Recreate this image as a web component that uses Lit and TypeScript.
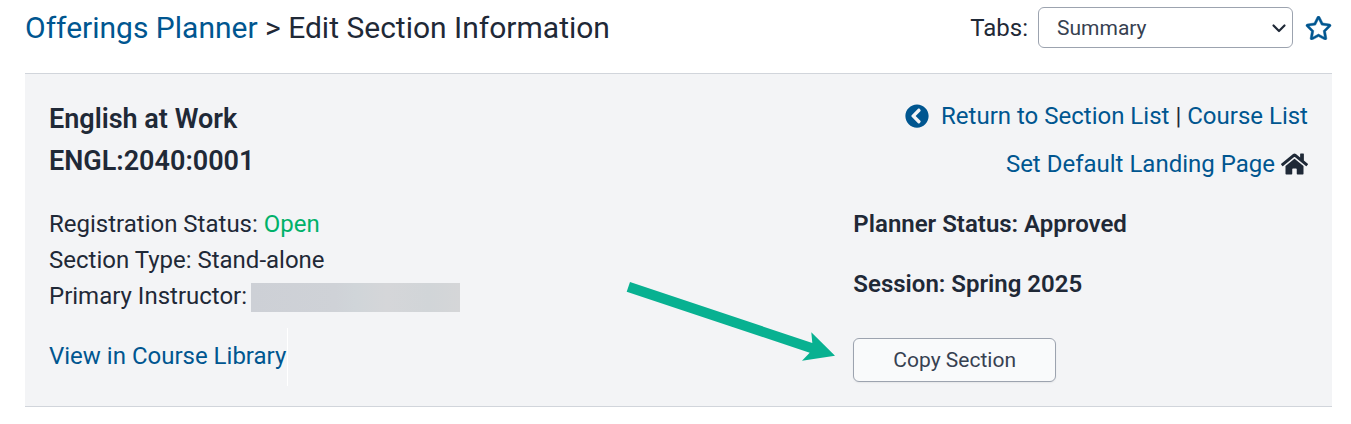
import { LitElement, html, css } from "lit";
import { customElement } from "lit/decorators.js";

@customElement("app-root")
export class AppRoot extends LitElement {
  static styles = css`
    :host {
      display: block;
      padding: 0 19px 16px 25px;
      background: #fff;
      color: #1f2937;
      font-family: Roboto, "Liberation Sans", sans-serif;
      font-size: 24px;
      line-height: 36px;
    }
    * {
      box-sizing: border-box;
    }
    h1, h2, p {
      margin: 0;
    }
    svg {
      display: block;
    }
    a {
      color: #005690;
      text-decoration: none;
    }
    .top {
      display: flex;
      justify-content: space-between;
      align-items: center;
      padding: 7px 0 25px;
    }
    .title {
      font-size: 30px;
      font-weight: 400;
      line-height: 41px;
    }
    .tabs {
      display: flex;
      align-items: center;
      gap: 10px;
    }
    .picker {
      display: grid;
      align-items: center;
      width: 255px;
    }
    .picker select,
    .picker svg {
      grid-area: 1 / 1;
    }
    .picker select {
      appearance: none;
      height: 41px;
      padding: 0 32px 0 18px;
      border: 1px solid #9ca3af;
      border-radius: 6px;
      background: #fff;
      color: #374151;
      font: 400 21px/32px Roboto, "Liberation Sans", sans-serif;
    }
    .picker svg {
      justify-self: end;
      margin-right: 6px;
      pointer-events: none;
    }
    .icon-button {
      padding: 0 0 0 2px;
      border: 0;
      background: none;
      color: #005690;
    }
    .panel {
      display: grid;
      grid-template-columns: 23fr 13fr;
      row-gap: 24px;
      padding: 24px 24px 20px;
      border: solid #d1d5db;
      border-width: 1px 0;
      background: #f3f4f6;
    }
    .course {
      font-size: 27px;
      font-weight: 600;
      line-height: 42px;
    }
    .links {
      display: flex;
      flex-direction: column;
      align-items: flex-end;
      gap: 12px;
    }
    .row {
      display: flex;
      align-items: center;
      gap: 6px;
      white-space: nowrap;
    }
    .back {
      display: flex;
      align-items: center;
      gap: 12px;
    }
    .open {
      color: #00b16a;
    }
    .instructor {
      display: flex;
      align-items: center;
      gap: 4px;
    }
    .redacted {
      width: 209px;
      height: 29px;
      margin-top: 2px;
      background: linear-gradient(90deg, #cdd0d6, #cfd2d7 40%, #d0d5d9 50%, #d5d6d9 65%, #d1d5d8 85%, #d5d6d8);
    }
    .library {
      width: fit-content;
      margin-top: 14px;
      padding: 10px 1px 12px 0;
      border-right: 1px solid #fff;
    }
    .status {
      display: flex;
      flex-direction: column;
      align-items: flex-start;
      gap: 24px;
      font-weight: 600;
    }
    .action {
      position: relative;
      margin-top: 12px;
    }
    .copy {
      display: block;
      height: 44px;
      padding: 0 39px;
      border: 1px solid #9ca3af;
      border-radius: 6px;
      background: #f9fafb;
      box-shadow: 0 1px 2px rgba(0, 0, 0, 0.06);
      color: #374151;
      font: 400 21px/32px Roboto, "Liberation Sans", sans-serif;
    }
    .arrow {
      position: absolute;
      top: -56px;
      right: calc(100% + 18px);
    }
  `;

  render() {
    return html`
      <header class="top">
        <h1 class="title"><a href="#planner">Offerings Planner</a> &gt; Edit Section Information</h1>
        <div class="tabs">
          <label for="tab">Tabs:</label>
          <div class="picker">
            <select id="tab"><option>Summary</option></select>
            <svg width="16" height="16" viewBox="0 0 16 16" fill="none" stroke="#1f2937" stroke-width="2.2" stroke-linecap="round" stroke-linejoin="round" aria-hidden="true"><path d="M2.5 5.5 8 11l5.500-5.500"/></svg>
          </div>
          <button class="icon-button" type="button" aria-label="Add to favorites">
            <svg width="27" height="24" viewBox="0 0 576 512" fill="currentColor" stroke="currentColor" stroke-width="10"><path d="M528.100 171.500L382 150.200 316.700 17.800c-11.700-23.600-45.600-23.900-57.400 0L194 150.200 47.900 171.500c-26.200 3.800-36.700 36.100-17.700 54.600l105.700 103-25 145.500c-4.500 26.300 23.200 46 46.400 33.700L288 439.600l130.700 68.700c23.200 12.200 50.900-7.400 46.400-33.700l-25-145.500 105.700-103c19-18.500 8.500-50.800-17.700-54.600zM388.600 312.300l23.700 138.400L288 385.400l-124.300 65.300 23.700-138.400-100.600-98 139-20.200 62.200-126 62.200 126 139 20.200-100.600 98z"/></svg>
          </button>
        </div>
      </header>
      <main class="panel">
        <h2 class="course">English at Work<br />ENGL:2040:0001</h2>
        <nav class="links">
          <div class="row">
            <a class="back" href="#sections">
              <svg width="24" height="24" viewBox="0 0 512 512" fill="currentColor" aria-hidden="true"><path d="M256 504C119 504 8 393 8 256S119 8 256 8s248 111 248 248-111 248-248 248zM142.100 273l135.500 135.500c9.400 9.400 24.600 9.400 33.900 0l17-17c9.400-9.400 9.400-24.600 0-33.900L226.900 256l101.600-101.600c9.400-9.400 9.400-24.600 0-33.900l-17-17c-9.400-9.400-24.600-9.400-33.900 0L142.100 239c-9.400 9.400-9.400 24.600 0 34z"/></svg>
              Return to Section List</a>
            <span>|</span>
            <a href="#courses">Course List</a>
          </div>
          <div class="row">
            <a href="#landing">Set Default Landing Page</a>
            <svg width="27" height="24" viewBox="0 0 576 512" fill="currentColor" aria-hidden="true"><path d="M280.370 148.260L96 300.110V464a16 16 0 0 0 16 16l112.060-.29a16 16 0 0 0 15.920-16V368a16 16 0 0 1 16-16h64a16 16 0 0 1 16 16v95.640a16 16 0 0 0 16 16.050L464 480a16 16 0 0 0 16-16V300L295.670 148.260a12.190 12.190 0 0 0-15.300 0zM571.600 251.470L488 182.560V44.050a12 12 0 0 0-12-12h-56a12 12 0 0 0-12 12v72.610L318.470 43a48 48 0 0 0-61 0L4.340 251.470a12 12 0 0 0-1.600 16.900l25.500 31A12 12 0 0 0 45.150 301l235.220-193.740a12.190 12.190 0 0 1 15.300 0L530.900 301a12 12 0 0 0 16.900-1.600l25.500-31a12 12 0 0 0-1.700-16.930z"/></svg>
          </div>
        </nav>
        <section>
          <p>Registration Status: <span class="open">Open</span></p>
          <p>Section Type: Stand-alone</p>
          <div class="instructor"><span>Primary Instructor:</span><span class="redacted"></span></div>
          <div class="library"><a href="#library">View in Course Library</a></div>
        </section>
        <section class="status">
          <p>Planner Status: Approved</p>
          <p>Session: Spring 2025</p>
          <div class="action">
            <button class="copy" type="button">Copy Section</button>
            <svg class="arrow" width="209" height="79" viewBox="0 0 209 79" fill="#08b191" aria-hidden="true"><path d="M4 0 .7 9.700 183.700 70.700 176 78.700 209 73.700 185.300 50.300 186.300 61Z"/></svg>
          </div>
        </section>
      </main>
    `;
  }
}
